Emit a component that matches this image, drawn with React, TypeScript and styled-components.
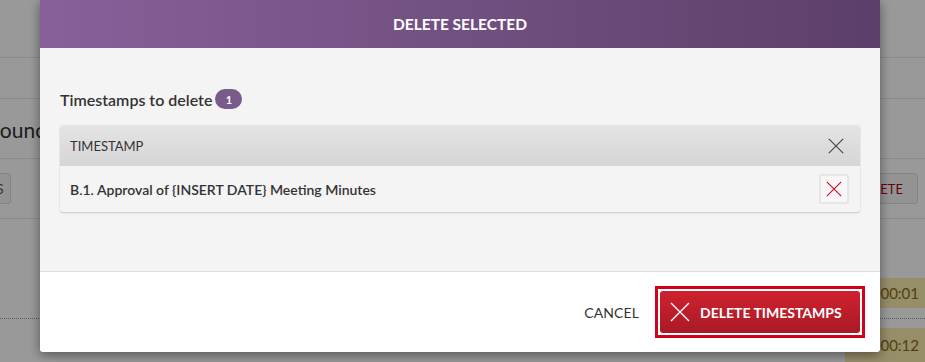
import React from "react";
import styled, { createGlobalStyle } from "styled-components";

const GlobalStyle = createGlobalStyle`
  html, body { margin: 0; padding: 0; }
  body {
    font-family: Lato, "Open Sans", "Liberation Sans", sans-serif;
    background: #ffffff;
    color: #333333;
    overflow: hidden;
  }
  * { box-sizing: border-box; }
`;

/* ---------- background page ---------- */

const Page = styled.div`
  width: 925px;
  height: 362px;
  overflow: hidden;
  display: flex;
  flex-direction: column;
  background: #ffffff;
`;

const Bar = styled.div<{ $h: number }>`
  height: ${(p) => p.$h}px;
  flex: 0 0 auto;
  border-bottom: 1px solid #e4e4e4;
  display: flex;
  align-items: center;
  justify-content: space-between;
  padding: 0 7px 0 0;
`;

const PageTitle = styled.h1`
  margin: 2px 0 0 -14px;
  font-size: 21px;
  font-weight: 400;
  color: #333;
  white-space: nowrap;
`;

const GhostButton = styled.button<{ $danger?: boolean; $offset?: number }>`
  height: 31px;
  margin-left: ${(p) => p.$offset ?? 0}px;
  padding: 0 ${(p) => (p.$danger ? 14 : 7)}px 0 7px;
  border: 1px solid #dcdcdc;
  border-radius: 3px;
  background: #f6f6f6;
  font-family: inherit;
  font-size: 13px;
  color: ${(p) => (p.$danger ? "#b3001b" : "#555")};
  white-space: nowrap;
`;

const EntryRow = styled.div<{ $h: number; $dotted?: boolean; $top?: boolean }>`
  height: ${(p) => p.$h}px;
  flex: 0 0 auto;
  display: flex;
  align-items: ${(p) => (p.$top ? "flex-start" : "flex-end")};
  justify-content: flex-end;
  padding-top: ${(p) => (p.$top ? 9 : 0)}px;
  border-bottom: ${(p) => (p.$dotted ? "1px dotted #9a9a9a" : "none")};
`;

const Chip = styled.div<{ $gap: number; $h?: number }>`
  width: 80px;
  height: ${(p) => p.$h ?? 30}px;
  flex: 0 0 auto;
  margin-bottom: ${(p) => p.$gap}px;
  background: #fbebb0;
  color: #8a6a14;
  font-size: 15px;
  display: flex;
  align-items: center;
  justify-content: flex-end;
  padding-right: 6px;
`;

const Overlay = styled.div`
  position: fixed;
  inset: 0;
  background: rgba(0, 0, 0, 0.4);
`;

/* ---------- modal ---------- */

const Modal = styled.div`
  position: fixed;
  top: 0;
  left: 40px;
  width: 840px;
  height: 352px;
  display: flex;
  flex-direction: column;
  border-radius: 0 0 3px 3px;
  box-shadow: 0 3px 12px rgba(0, 0, 0, 0.45);
`;

const Header = styled.div`
  height: 48px;
  flex: 0 0 auto;
  display: flex;
  align-items: center;
  justify-content: center;
  background: linear-gradient(to right, #88609a, #5c3f68);
  color: #ffffff;
  font-size: 15.5px;
  font-weight: 700;
`;

const Body = styled.div`
  flex: 1 1 auto;
  background: #f4f4f4;
  padding: 41px 20px 0 20px;
  border-bottom: 1px solid #dedede;
`;

const SectionTitle = styled.div`
  display: flex;
  align-items: center;
  gap: 3px;
  height: 20px;
  font-size: 16px;
  font-weight: 600;
  color: #333;
`;

const Badge = styled.span`
  display: inline-flex;
  align-items: center;
  justify-content: center;
  width: 27px;
  height: 20px;
  border-radius: 10px;
  background: #7a5a8b;
  color: #ffffff;
  font-size: 11px;
  font-weight: 700;
`;

const Table = styled.div`
  margin-top: 16px;
  border-radius: 3px;
  background: #f4f4f4;
  box-shadow: 0 1px 2px rgba(0, 0, 0, 0.18);
  overflow: hidden;
`;

const TableHead = styled.div`
  height: 41px;
  display: flex;
  align-items: center;
  justify-content: space-between;
  padding: 0 16px 0 10px;
  background: linear-gradient(to bottom, #e4e4e4, #d5d5d5);
  font-size: 13px;
  color: #333;
`;

const TableRow = styled.div`
  height: 46px;
  display: flex;
  align-items: center;
  justify-content: space-between;
  padding: 0 11px 0 10px;
  font-size: 14px;
  font-weight: 600;
  color: #333;
`;

const IconBox = styled.span`
  display: inline-flex;
  align-items: center;
  justify-content: center;
`;

const RemoveButton = styled.button`
  width: 30px;
  height: 30px;
  padding: 0;
  display: flex;
  align-items: center;
  justify-content: center;
  background: #f7f7f7;
  border: 2px solid #e6e6e6;
  border-radius: 2px;
`;

const Footer = styled.div`
  flex: 0 0 80px;
  background: #ffffff;
  border-radius: 0 0 3px 3px;
  display: flex;
  align-items: center;
  justify-content: flex-end;
  gap: 16px;
  padding: 0 15px 0 0;
`;

const CancelButton = styled.button`
  background: none;
  border: none;
  padding: 0;
  font-family: inherit;
  font-size: 14px;
  color: #333;
  letter-spacing: 0.1px;
`;

const FocusRing = styled.span`
  display: flex;
  padding: 2px;
  border: 3px solid #d0021b;
  background: #ffffff;
`;

const DangerButton = styled.button`
  width: 200px;
  height: 42px;
  display: flex;
  align-items: center;
  gap: 10px;
  padding: 0 0 0 10px;
  border: none;
  border-radius: 3px;
  background: linear-gradient(to bottom, #cf212f, #a91a25);
  color: #ffffff;
  font-family: inherit;
  font-size: 14px;
  font-weight: 700;
  white-space: nowrap;
`;

const Cross = ({ size, color, width }: { size: number; color: string; width: number }) => (
  <svg width={size} height={size} viewBox="0 0 20 20" fill="none">
    <path d="M1 1L19 19M19 1L1 19" stroke={color} strokeWidth={width} />
  </svg>
);

export default function App() {
  return (
    <>
      <GlobalStyle />
      <Page>
        <Bar $h={58} />
        <Bar $h={41} />
        <Bar $h={60}>
          <PageTitle>Council Meeting</PageTitle>
        </Bar>
        <Bar $h={60}>
          <GhostButton $offset={-85}>TIMESTAMPS</GhostButton>
          <GhostButton $danger>DELETE</GhostButton>
        </Bar>
        <EntryRow $h={100} $dotted>
          <Chip $gap={10}>0:00:01</Chip>
        </EntryRow>
        <EntryRow $h={44} $top>
          <Chip $gap={0} $h={34}>0:00:12</Chip>
        </EntryRow>
      </Page>
      <Overlay />
      <Modal>
        <Header>DELETE SELECTED</Header>
        <Body>
          <SectionTitle>
            Timestamps to delete <Badge>1</Badge>
          </SectionTitle>
          <Table>
            <TableHead>
              TIMESTAMP
              <IconBox>
                <Cross size={16} color="#444" width={1.4} />
              </IconBox>
            </TableHead>
            <TableRow>
              B.1. Approval of {"{INSERT DATE}"} Meeting Minutes
              <RemoveButton>
                <Cross size={16} color="#d0021b" width={1.3} />
              </RemoveButton>
            </TableRow>
          </Table>
        </Body>
        <Footer>
          <CancelButton>CANCEL</CancelButton>
          <FocusRing>
            <DangerButton>
              <Cross size={20} color="#ffffff" width={1.4} />
              DELETE TIMESTAMPS
            </DangerButton>
          </FocusRing>
        </Footer>
      </Modal>
    </>
  );
}
